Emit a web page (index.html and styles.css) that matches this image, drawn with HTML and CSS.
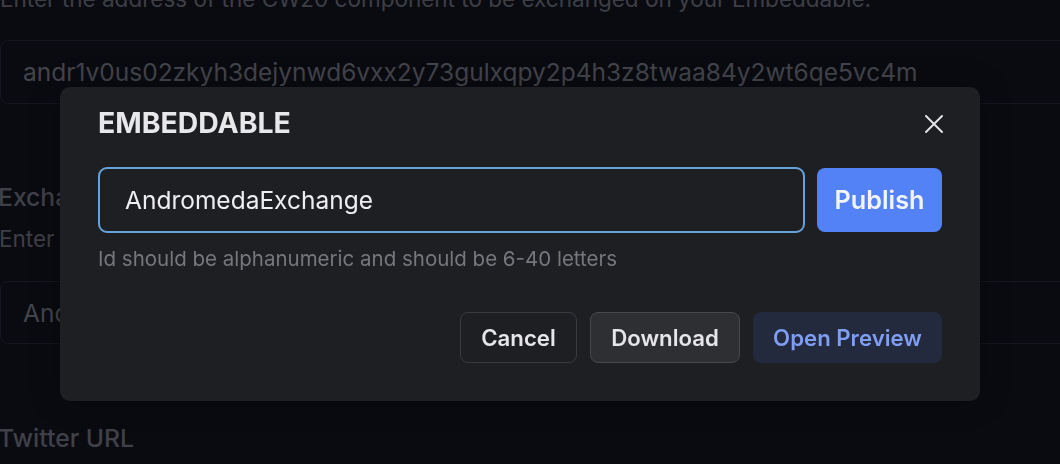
FILE: index.html
```html
<!DOCTYPE html>
<html>
<head>
<meta charset="utf-8">
<link rel="stylesheet" href="styles.css">
</head>
<body>
<div class="page">
  <p class="bg-help bg-help-top">Enter the address of the CW20 component to be exchanged on your Embeddable.</p>
  <div class="bg-input">andr1v0us02zkyh3dejynwd6vxx2y73gulxqpy2p4h3z8twaa84y2wt6qe5vc4m</div>
  <div class="bg-label">Exchange ID</div>
  <p class="bg-help">Enter the ID for your exchange</p>
  <div class="bg-input bg-input-2">AndromedaExchange</div>
  <div class="bg-label bg-label-last">Twitter URL</div>
</div>
<div class="overlay">
  <div class="modal">
    <div class="modal-header">
      <h2 class="modal-title">EMBEDDABLE</h2>
      <button class="close-btn" aria-label="Close">
        <svg width="18" height="18" viewBox="0 0 18 18"><path d="M1 1L17 17M17 1L1 17" stroke="#e6e6e8" stroke-width="1.9" stroke-linecap="round"/></svg>
      </button>
    </div>
    <div class="modal-body">
      <div class="input-row">
        <div class="id-input">AndromedaExchange</div>
        <button class="btn btn-publish">Publish</button>
      </div>
      <p class="help">Id should be alphanumeric and should be 6-40 letters</p>
    </div>
    <div class="modal-footer">
      <button class="btn btn-cancel">Cancel</button>
      <button class="btn btn-download">Download</button>
      <button class="btn btn-preview">Open Preview</button>
    </div>
  </div>
</div>
</body>
</html>
```
FILE: styles.css
```css
* { box-sizing: border-box; }
html, body { margin: 0; padding: 0; }
body {
  background: #0a0b11;
  font-family: Inter, "Noto Sans", sans-serif;
  width: 1060px;
  height: 464px;
  overflow: hidden;
}
.page {
  display: flex;
  flex-direction: column;
  margin-top: -16px;
}
.bg-help {
  margin: 0;
  color: #3e3f46;
  font-size: 22.5px;
  line-height: 30px;
}
.bg-help-top { margin-bottom: 26px; }
.bg-input {
  height: 64px;
  width: 1100px;
  border: 1px solid #16171e;
  border-radius: 8px;
  padding-left: 22px;
  display: flex;
  align-items: center;
  color: #44454c;
  font-size: 24.5px;
  flex-shrink: 0;
}
.bg-label {
  margin-top: 78px;
  color: #404148;
  font-size: 24.7px;
  font-weight: 500;
  line-height: 30px;
  margin-left: -2px;
}
.bg-label + .bg-help { margin-top: 12px; margin-left: -1px; }
.bg-input-2 { margin-top: 27px; height: 63px; }
.bg-label-last { margin-top: 79px; }

.overlay {
  position: fixed;
  inset: 0;
  padding: 87px 0 0 60px;
}
.modal {
  width: 920px;
  height: 314px;
  background: #1e1f23;
  border-radius: 10px;
  padding: 0 38px;
  display: flex;
  flex-direction: column;
  box-shadow: 0 0 30px rgba(0,0,0,0.3);
}
.modal-header {
  display: flex;
  justify-content: space-between;
  align-items: center;
  padding-top: 19px;
}
.modal-title {
  margin: 0;
  font-size: 28.4px;
  font-weight: 700;
  color: #e8e8ea;
  line-height: 34px;
}
.close-btn {
  background: none;
  border: 0;
  padding: 0;
  margin-right: -1px;
  margin-top: 2px;
  display: flex;
}
.modal-body { margin-top: 27px; }
.input-row {
  display: flex;
  gap: 12px;
  align-items: center;
}
.id-input {
  flex: 1;
  height: 66px;
  border: 2px solid #66a3db;
  border-radius: 9px;
  padding-left: 25px;
  display: flex;
  align-items: center;
  color: #eeeef0;
  font-size: 24.5px;
}
.btn {
  font-family: Inter, "Noto Sans", sans-serif;
  font-weight: 600;
  border-radius: 8px;
  cursor: pointer;
}
.btn-publish {
  width: 125px;
  height: 64px;
  background: #5282f6;
  border: 0;
  color: #f2f4fa;
  font-size: 25.2px;
}
.help {
  margin: 14px 0 0 0;
  color: #76777c;
  font-size: 20.5px;
  line-height: 24px;
}
.modal-footer {
  margin-top: auto;
  margin-bottom: 38px;
  display: flex;
  justify-content: flex-end;
  gap: 13px;
}
.modal-footer .btn {
  height: 51px;
  font-size: 22.2px;
}
.btn-cancel {
  width: 117px;
  background: transparent;
  border: 1px solid #3a3b41;
  color: #e6e6e8;
}
.btn-download {
  width: 150px;
  background: #2e2f33;
  border: 1px solid #47484d;
  color: #e6e6e8;
}
.btn-preview {
  width: 189px;
  background: #232a3d;
  border: 0;
  color: #7e9df3;
}
```
